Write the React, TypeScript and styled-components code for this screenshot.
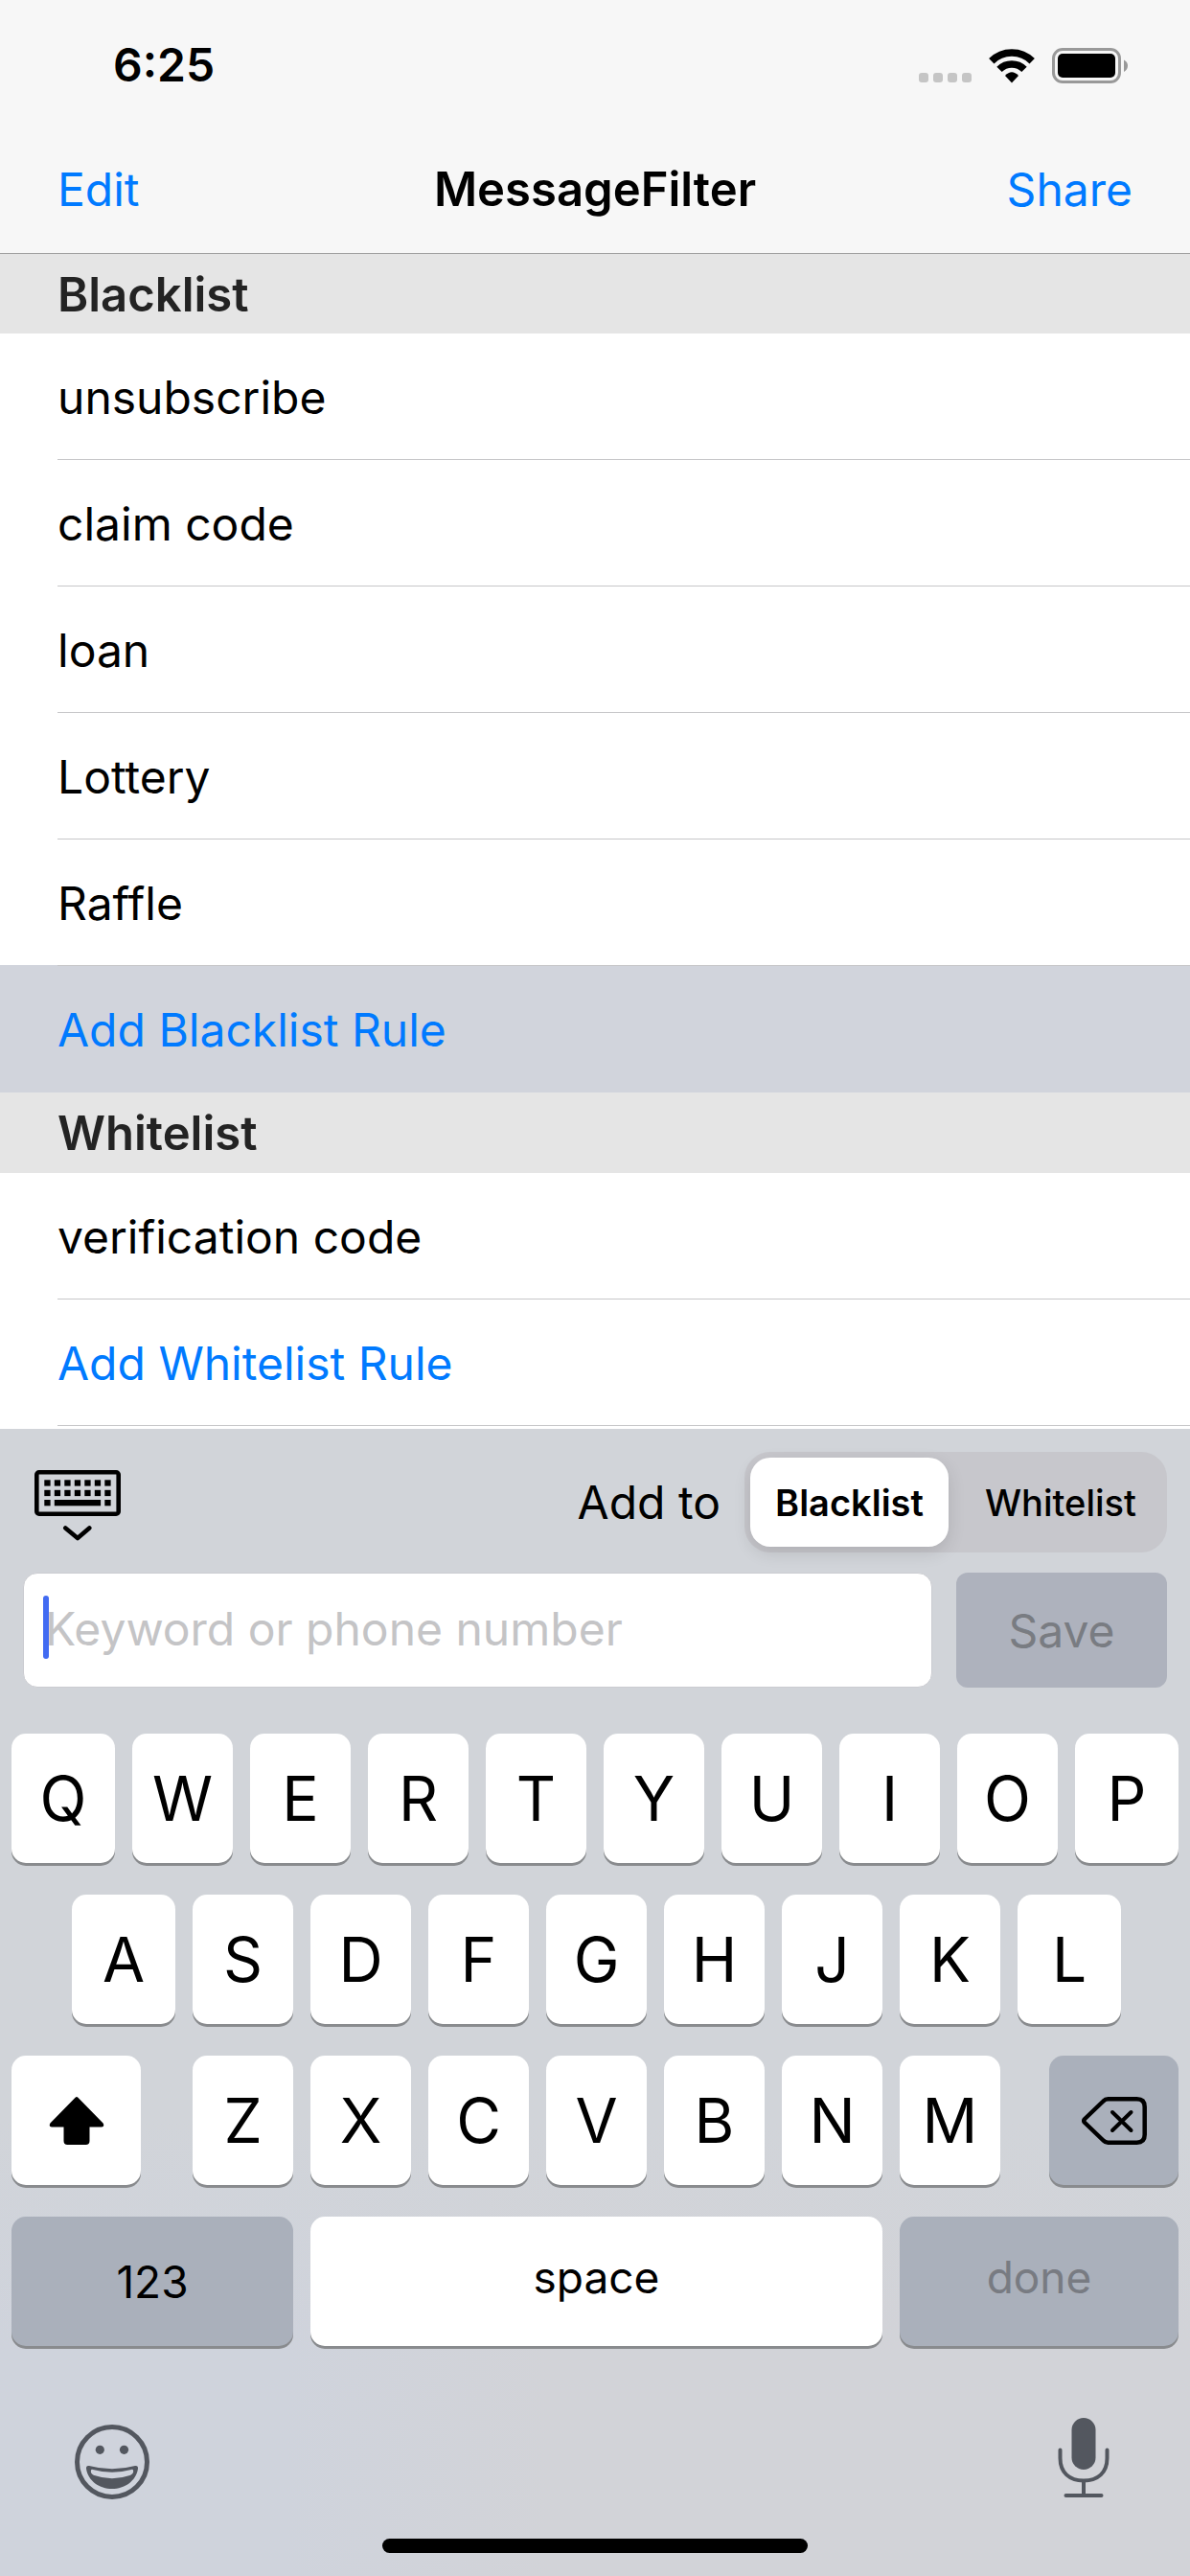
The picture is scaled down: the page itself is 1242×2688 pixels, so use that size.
import React, { useState } from "react";
import styled, { createGlobalStyle, css } from "styled-components";

const GlobalStyle = createGlobalStyle`
  *, *::before, *::after { box-sizing: border-box; }
  body {
    margin: 0;
    background: #fff;
    color: #000;
    font-family: Inter, "Liberation Sans", sans-serif;
    font-size: 48px;
    line-height: 60px;
  }
  button, input { font: inherit; color: inherit; margin: 0; }
  button { border: 0; padding: 0; background: none; cursor: pointer; }
  h1, h2, ul, fieldset { margin: 0; padding: 0; border: 0; font: inherit; }
  svg { display: block; }
`;

const Screen = styled.div`
  display: flex;
  flex-direction: column;
  height: 100vh;
`;

const TopBar = styled.header`
  display: flex;
  flex-direction: column;
  height: 265px;
  flex: none;
  background: #f7f7f7;
  border-bottom: 1px solid #9f9f9f;
`;

const StatusBar = styled.div`
  display: flex;
  align-items: center;
  justify-content: space-between;
  height: 132px;
  padding: 4px 64px 0 118px;
`;

const Clock = styled.time`
  font-weight: 600;
`;

const StatusIcons = styled.div`
  display: flex;
  align-items: center;
  gap: 18px;
`;

const NavBar = styled.nav`
  display: grid;
  grid-template-columns: 1fr auto 1fr;
  align-items: center;
  height: 132px;
  padding: 0 60px;
`;

const NavButton = styled.button<{ $end?: boolean }>`
  justify-self: ${(p) => (p.$end ? "end" : "start")};
  color: #007aff;
`;

const Title = styled.h1`
  font-size: 49px;
  font-weight: 600;
`;

const Rules = styled.main`
  flex: 1 1 0;
  min-height: 0;
  overflow-y: auto;
`;

const SectionTitle = styled.h2`
  display: flex;
  align-items: center;
  height: 84px;
  padding: 2px 60px 0;
  background: #e5e5e5;
  color: #232323;
  font-size: 49px;
  font-weight: 600;

  section:first-child > & {
    height: 83px;
  }
`;

const RuleList = styled.ul`
  list-style: none;
`;

const Row = styled.li<{ $selected?: boolean }>`
  display: flex;
  height: 132px;
  padding-left: 60px;
  ${(p) =>
    p.$selected &&
    css`
      height: 133px;
      margin-top: -1px;
      background: #d1d4dc;
    `}
`;

const RowBody = styled.div<{ $line: boolean }>`
  display: flex;
  align-items: center;
  flex: 1;
  padding-top: 3px;
  border-bottom: 1px solid ${(p) => (p.$line ? "#c7c7c9" : "transparent")};
`;

const AddButton = styled.button`
  flex: 1;
  text-align: left;
  color: #007aff;
`;

const Panel = styled.section`
  flex: none;
  background:
    linear-gradient(to bottom, #d1d4d9 60%, rgba(209, 212, 217, 0) 80%),
    linear-gradient(to right, #cfd3dc 24%, #d2d3d8 46%);
`;

const Accessory = styled.form`
  display: flex;
  flex-direction: column;
  gap: 21px;
  padding: 24px 24px 48px;
`;

const AccessoryRow = styled.div`
  display: flex;
  align-items: center;
  gap: 25px;
`;

const HideButton = styled.button`
  padding: 6px 12px 0;
  margin-right: auto;
`;

const Segmented = styled.fieldset`
  display: grid;
  grid-template-columns: 207px 1fr;
  gap: 12px;
  width: 441px;
  height: 105px;
  padding: 6px;
  border-radius: 27px;
  background: #c7c7cc;
`;

const Segment = styled.label<{ $on: boolean }>`
  display: flex;
  align-items: center;
  justify-content: center;
  border-radius: 21px;
  font-size: 38px;
  font-weight: ${(p) => (p.$on ? 600 : 500)};
  background: ${(p) => (p.$on ? "#fff" : "transparent")};
  box-shadow: ${(p) => (p.$on ? "0 6px 18px rgba(0, 0, 0, 0.12)" : "none")};
`;

const HiddenRadio = styled.input`
  appearance: none;
  position: absolute;
  opacity: 0;
`;

const Field = styled.div`
  position: relative;
  flex: 1;
`;

const KeywordInput = styled.input`
  display: block;
  width: 100%;
  height: 120px;
  padding: 0 20px 4px 22px;
  border: 1px solid #cbccd1;
  border-radius: 15px;
  background: #fff;
  outline: none;
  caret-color: transparent;

  &::placeholder {
    color: #c4c4c6;
    opacity: 1;
  }
`;

const Caret = styled.span`
  position: absolute;
  left: 21px;
  top: 24px;
  width: 6px;
  height: 66px;
  border-radius: 3px;
  background: #426bf2;
`;

const SaveButton = styled.button`
  width: 220px;
  height: 120px;
  padding-top: 2px;
  border-radius: 12px;
  background: #aeb2bd;
  color: #797c82;
`;

const Keys = styled.div`
  display: grid;
  gap: 33px;
  padding: 0 12px;
`;

const KeyRow = styled.div<{ $columns: string; $inset?: boolean }>`
  display: grid;
  grid-template-columns: ${(p) => p.$columns};
  gap: 18px;
  padding: ${(p) => (p.$inset ? "0 60px 0 63px" : "0")};
`;

const Key = styled.button<{ $dark?: boolean; $label?: "digits" | "word"; $muted?: boolean }>`
  display: flex;
  align-items: center;
  justify-content: center;
  min-width: 0;
  height: 135px;
  padding-bottom: ${(p) => (p.$label === "word" ? "10px" : "0")};
  border-radius: 15px;
  background: ${(p) => (p.$dark ? "#aab0bb" : "#fff")};
  box-shadow: 0 3px 0 #898b8e;
  color: ${(p) => (p.$muted ? "#787b82" : "#000")};
  font-size: ${(p) => (p.$label ? "46px" : "64px")};
`;

const Dock = styled.div`
  display: flex;
  align-items: flex-start;
  justify-content: space-between;
  padding: 75px 84px 0 78px;
  height: 201px;
`;

const DockButton = styled.button<{ $drop?: boolean }>`
  padding-top: ${(p) => (p.$drop ? "7px" : "0")};
`;

const HomeIndicator = styled.div`
  width: 444px;
  height: 15px;
  margin: 0 auto 24px;
  border-radius: 8px;
  background: #000;
`;

const SignalIcon = () => (
  <svg width="55" height="37" viewBox="0 0 55 37" aria-hidden="true">
    {[0, 15, 30, 45].map((x) => (
      <rect key={x} x={x} y="26" width="10" height="10" rx="3" fill="#c5c5c5" />
    ))}
  </svg>
);

const WifiIcon = () => (
  <svg width="48" height="37" viewBox="0 0 48 37" aria-hidden="true">
    <g fill="none" stroke="#000">
      <path d="M2.8 13.8A30 30 0 0 1 45.2 13.8" strokeWidth="7.6" />
      <path d="M11 22.4A18.4 18.4 0 0 1 37 22.4" strokeWidth="7.6" />
    </g>
    <path d="M24 36.4L17 29Q24 21.500 31 29Z" fill="#000" />
  </svg>
);

const BatteryIcon = () => (
  <svg width="80" height="37" viewBox="0 0 80 37" aria-hidden="true">
    <rect x="1.500" y="1.500" width="69" height="34" rx="9.500" fill="none" stroke="#999" strokeWidth="3" />
    <rect x="6" y="6" width="60" height="25" rx="5" fill="#000" />
    <path d="M75 12.500Q79 14.500 79 18.500T75 25Z" fill="#999" />
  </svg>
);

const KeyboardIcon = () => (
  <svg width="90" height="74" viewBox="0 0 90 74" aria-hidden="true">
    <rect x="2.300" y="2.300" width="85.400" height="43.400" rx="2.500" fill="none" stroke="#000" strokeWidth="4.600" />
    {[0, 1, 2, 3, 4, 5, 6].map((c) => (
      <g key={c}>
        <rect x={10.3 + c * 10.5} y="10.300" width="6.300" height="6.300" />
        <rect x={10.3 + c * 10.5} y="20.800" width="6.300" height="6.300" />
      </g>
    ))}
    <rect x="10.300" y="31" width="6.300" height="6.300" />
    <rect x="20.800" y="31" width="48.300" height="6.300" />
    <rect x="73.300" y="31" width="6.300" height="6.300" />
    <path d="M32.300 60.500L45 71L57.300 60.500" fill="none" stroke="#000" strokeWidth="4.600" strokeLinecap="round" strokeLinejoin="round" />
  </svg>
);

const ShiftIcon = () => (
  <svg width="58" height="50" viewBox="0 0 58 50" aria-hidden="true">
    <path d="M27.600 .7Q29 -.7 30.400 .7L56.600 27.500Q58.500 31.500 55 31.500H42.500V46Q42.500 50 38.500 50H19.500Q15.500 50 15.500 46V31.500H3Q-.5 31.500 1.400 27.500Z" />
  </svg>
);

const DeleteIcon = () => (
  <svg width="68" height="50" viewBox="0 0 68 50" aria-hidden="true">
    <g fill="none" stroke="#000" strokeLinecap="round" strokeLinejoin="round">
      <path strokeWidth="4.500" d="M27.500 2.300H57.500Q65.700 2.300 65.700 10.500V39.500Q65.700 47.700 57.500 47.700H27.500Q24.500 47.700 22.500 45.500L3.200 27Q1.300 25 3.200 23L22.500 4.500Q24.500 2.300 27.500 2.300Z" />
      <path strokeWidth="4" d="M32 16L51.500 35M51.500 16L32 35" />
    </g>
  </svg>
);

const EmojiIcon = () => (
  <svg width="78" height="78" viewBox="0 0 78 78" aria-hidden="true" fill="#53575f">
    <circle cx="39" cy="39" r="36.500" fill="none" stroke="#53575f" strokeWidth="5" />
    <circle cx="26.300" cy="26.300" r="4.600" />
    <circle cx="51.500" cy="26.300" r="4.600" />
    <path
      fillRule="evenodd"
      d="M15 43Q39 49.500 63 43Q66.300 42.500 66 46C64 59 52 67 39 67S14 59 12 46Q11.700 42.500 15 43ZM17 47.500C16.300 51 18.500 52.200 20.500 53Q39 59.500 57.500 53C59.500 52.200 61.700 51 61 47.500Q60.500 46.500 59 47Q39 52.500 19 47Q17.500 46.500 17 47.500Z"
    />
  </svg>
);

const MicIcon = () => (
  <svg width="54" height="84" viewBox="0 0 54 84" aria-hidden="true">
    <rect x="14.500" y="0" width="25" height="54" rx="12.500" fill="#53575f" />
    <g fill="none" stroke="#53575f" strokeLinecap="round">
      <path d="M2.500 33.500V42C2.500 57 12 65.500 27 65.500S51.500 57 51.500 42V33.500" strokeWidth="4" />
      <path d="M27 66V80" strokeWidth="4" />
      <path d="M8.500 81H45.500" strokeWidth="4" />
    </g>
  </svg>
);

type ListName = "Blacklist" | "Whitelist";

const initialRules: Record<ListName, string[]> = {
  Blacklist: ["unsubscribe", "claim code", "loan", "Lottery", "Raffle"],
  Whitelist: ["verification code"],
};

const listNames: ListName[] = ["Blacklist", "Whitelist"];

export default function App() {
  const [rules, setRules] = useState(initialRules);
  const [target, setTarget] = useState<ListName>("Blacklist");
  const [keyword, setKeyword] = useState("");

  const press = (letter: string) => setKeyword((k) => k + letter);

  const save = (event: React.FormEvent) => {
    event.preventDefault();
    if (!keyword.trim()) return;
    setRules((r) => ({ ...r, [target]: [...r[target], keyword.trim()] }));
    setKeyword("");
  };

  const letters = (row: string) =>
    row.split("").map((letter) => (
      <Key key={letter} type="button" onClick={() => press(letter)}>
        {letter}
      </Key>
    ));

  return (
    <Screen>
      <GlobalStyle />
      <TopBar>
        <StatusBar>
          <Clock>6:25</Clock>
          <StatusIcons>
            <SignalIcon />
            <WifiIcon />
            <BatteryIcon />
          </StatusIcons>
        </StatusBar>
        <NavBar>
          <NavButton type="button">Edit</NavButton>
          <Title>MessageFilter</Title>
          <NavButton type="button" $end>
            Share
          </NavButton>
        </NavBar>
      </TopBar>

      <Rules>
        {listNames.map((name) => (
          <section key={name}>
            <SectionTitle>{name}</SectionTitle>
            <RuleList>
              {rules[name].map((rule) => (
                <Row key={rule}>
                  <RowBody $line>{rule}</RowBody>
                </Row>
              ))}
              <Row $selected={target === name}>
                <RowBody $line={target !== name}>
                  <AddButton type="button" onClick={() => setTarget(name)}>
                    Add {name} Rule
                  </AddButton>
                </RowBody>
              </Row>
            </RuleList>
          </section>
        ))}
      </Rules>

      <Panel>
        <Accessory onSubmit={save}>
          <AccessoryRow>
            <HideButton type="button" aria-label="Hide keyboard">
              <KeyboardIcon />
            </HideButton>
            <span id="add-to">Add to</span>
            <Segmented aria-labelledby="add-to">
              {listNames.map((name) => (
                <Segment key={name} $on={target === name}>
                  <HiddenRadio
                    type="radio"
                    name="target"
                    checked={target === name}
                    onChange={() => setTarget(name)}
                  />
                  {name}
                </Segment>
              ))}
            </Segmented>
          </AccessoryRow>
          <AccessoryRow>
            <Field>
              <KeywordInput
                type="text"
                aria-label="Keyword or phone number"
                placeholder="Keyword or phone number"
                value={keyword}
                onChange={(e) => setKeyword(e.target.value)}
              />
              {keyword === "" && <Caret />}
            </Field>
            <SaveButton type="submit">Save</SaveButton>
          </AccessoryRow>
        </Accessory>

        <Keys>
          <KeyRow $columns="108fr repeat(8, 105fr) 108fr">{letters("QWERTYUIOP")}</KeyRow>
          <KeyRow $columns="108fr repeat(7, 105fr) 108fr" $inset>
            {letters("ASDFGHJKL")}
          </KeyRow>
          <KeyRow $columns="135fr 18fr repeat(7, 105fr) 15fr 135fr">
            <Key type="button" aria-label="Shift">
              <ShiftIcon />
            </Key>
            <span />
            {letters("ZXCVBNM")}
            <span />
            <Key type="button" $dark aria-label="Delete" onClick={() => setKeyword((k) => k.slice(0, -1))}>
              <DeleteIcon />
            </Key>
          </KeyRow>
          <KeyRow $columns="294fr 597fr 291fr">
            <Key type="button" $dark $label="digits">
              123
            </Key>
            <Key type="button" $label="word" onClick={() => press(" ")}>
              space
            </Key>
            <Key type="button" $dark $label="word" $muted>
              done
            </Key>
          </KeyRow>
        </Keys>

        <Dock>
          <DockButton type="button" $drop aria-label="Emoji">
            <EmojiIcon />
          </DockButton>
          <DockButton type="button" aria-label="Dictation">
            <MicIcon />
          </DockButton>
        </Dock>
        <HomeIndicator />
      </Panel>
    </Screen>
  );
}
